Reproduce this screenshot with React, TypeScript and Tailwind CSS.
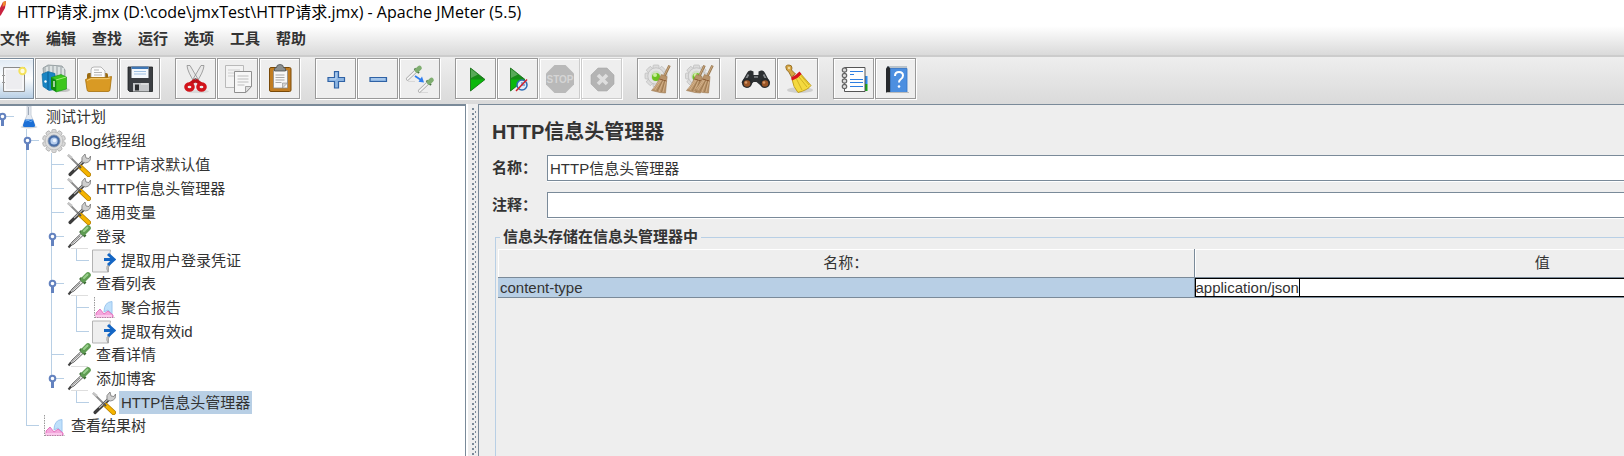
import { useState, type ReactNode } from 'react'
import clsx from 'clsx'

type IconName =
  | 'new' | 'templates' | 'open' | 'save' | 'cut' | 'copy' | 'paste' | 'plus' | 'minus' | 'toggle'
  | 'start' | 'startNoPause' | 'stop' | 'shutdown' | 'clear' | 'clearAll' | 'search' | 'resetSearch' | 'functions' | 'help'

const gearTeeth = [0, 45, 90, 135, 180, 225, 270, 315]

function Cog({ cx, cy }: { cx: number; cy: number }) {
  return (
    <g>
      {gearTeeth.map((a) => (
        <rect key={a} x={cx - 3} y={cy - 11} width="6" height="5" rx="1" fill="#dcdcdc" stroke="#b5b5b5" strokeWidth=".6" transform={`rotate(${a} ${cx} ${cy})`} />
      ))}
      <circle cx={cx} cy={cy} r="8.2" fill="#e3e3e3" stroke="#bdbdbd" strokeWidth=".8" />
      <circle cx={cx} cy={cy} r="5.4" fill="#d2dccb" />
      <circle cx={cx} cy={cy + 1} r="4" fill="#6cc21f" />
      <circle cx={cx - 1} cy={cy - 1} r="2" fill="#c9ef9c" />
    </g>
  )
}

function Broom({ dx }: { dx: number }) {
  return (
    <g transform={`translate(${dx} 0)`}>
      <path d="M28.5 3.5 23.5 14" stroke="#9c7c55" strokeWidth="2.6" />
      <path d="M28.2 4 23.2 14" stroke="#c9a67c" strokeWidth="1" />
      <path d="M20.5 12.5 26 14.5 25.5 20 24.5 31 19 30.5 10.5 28.5 Q16 23 18 17Z" fill="#b8936a" stroke="#9d7850" strokeWidth=".6" />
      <path d="M21 17 14 28M23 17 18 30M25 18 22 30M19.5 17.5 12.5 27" stroke="#d9b890" strokeWidth=".8" />
      <path d="M22 18 16 29M24 18 20.5 30" stroke="#8d6a40" strokeWidth=".6" />
      <path d="M18.5 17 25.5 19" stroke="#8a5a33" strokeWidth="1" />
    </g>
  )
}

function Dropper({ x, y }: { x: number; y: number }) {
  return (
    <g transform={`translate(${x} ${y})`}>
      <path d="M0 12 9 3.5" stroke="#a5a5a5" strokeWidth="3.2" strokeLinecap="round" />
      <path d="M0 12 9 3.5" stroke="#f4f4f4" strokeWidth="1.8" strokeLinecap="round" />
      <path d="M7 1.5 11.5 6" stroke="#47703f" strokeWidth="2" />
      <path d="M9.5 3.2 12 1" stroke="#7fae70" strokeWidth="4.6" strokeLinecap="round" />
    </g>
  )
}

const toolIcons: Record<IconName, ReactNode> = {
  new: (
    <g transform="translate(-1 0)">
      <path d="M7.5 5.5h21v24h-21z" fill="#ededf0" stroke="#8b8b8b" />
      <path d="M9 7h18v21H9z" fill="none" stroke="#fff" />
      <path d="M6 13.5h3M6 20.500h3" stroke="#999" />
      <circle cx="26.500" cy="9" r="3.200" fill="#fdfbe0" stroke="#f4e25c" strokeWidth="2" />
    </g>
  ),
  templates: (
    <>
      <ellipse cx="24" cy="28" rx="7" ry="2" fill="#c5c5c5" />
      <path d="M4 6 9 3l14 1 3 4v8H5z" fill="#b9c0c2" stroke="#8c9598" strokeWidth=".8" />
      <path d="M8 5v8M12 4v8M16 4v9M20 5v8M24 6v8" stroke="#e7ebec" strokeWidth="1.600" />
      <path d="M3 12 9 9.500l7 2v16l-6 1-6-4z" fill="#1a86c4" stroke="#0c6498" strokeWidth=".6" />
      <path d="M9 10v18" stroke="#0b5d91" />
      <circle cx="6.500" cy="19.500" r="1.200" fill="#fff" />
      <path d="M12 15.500 17 18v12l-5-3z" fill="#118a11" />
      <path d="M12 15.500 22 12.500l5.500 2.500v12L17 30V18z" fill="#3cc61c" stroke="#129012" strokeWidth=".6" />
      <path d="M17 18 27 15" stroke="#a2ee7b" />
      <path d="M15 19v6" stroke="#fff" strokeWidth="1.200" />
    </>
  ),
  open: (
    <>
      <path d="M6 13q0-2 2-2h17q2 0 2 2v10H6z" fill="#9a6a10" />
      <path d="M10 16V8q0-3 3-3h7l4 4v7z" fill="#fbfbfb" stroke="#a7a7a7" strokeWidth=".8" />
      <path d="M13 8h5M13 10.500h8M13 13h8" stroke="#b5b5b5" />
      <path d="M4.500 17.500 9 15.500h17l4.500-1-1.500 13q0 2-2 2H8q-2 0-2-2z" fill="#d99a24" stroke="#a6700b" strokeWidth=".8" />
      <path d="M6 18.500 10 16.700h16l3-.7" stroke="#f6cf78" fill="none" />
    </>
  ),
  save: (
    <>
      <path d="M5 5h24.500v24.500H6.500L5 28z" fill="#3b3e42" stroke="#1d1f21" strokeWidth=".8" />
      <path d="M8.500 5h17v11h-17z" fill="#f4f8fc" />
      <path d="M8.500 4.600h17v2.400h-17z" fill="#3f77b5" />
      <path d="M11 9.500h12M11 12h12" stroke="#9fc0e2" />
      <path d="M10 21h16v8.500H10z" fill="#c4c6c8" />
      <path d="M12 22.500h4v6h-4z" fill="#2a2c2e" />
      <path d="M18 22h7" stroke="#eee" />
    </>
  ),
  cut: (
    <>
      <ellipse cx="19" cy="29.500" rx="11" ry="1.600" fill="#d9d9d9" />
      <path d="M8 3.500 11 3.500 19.500 18 16 21Q8.500 10 8 3.500zM25 3.500 22 3.500 13.500 18 17 21Q24.500 10 25 3.500z" fill="#e8e8e8" stroke="#8d8d8d" strokeWidth=".8" />
      <path d="M16.500 18 11 22M16.500 18 22 22" stroke="#c01016" strokeWidth="3.500" />
      <ellipse cx="10.500" cy="25" rx="3.600" ry="3" fill="#eee" stroke="#d2141b" strokeWidth="3.400" />
      <ellipse cx="22.500" cy="25" rx="3.600" ry="3" fill="#eee" stroke="#d2141b" strokeWidth="3.400" />
      <circle cx="16.500" cy="17" r="1" fill="#666" />
    </>
  ),
  copy: (
    <>
      <path d="M4.500 3.500h18v22h-18z" fill="#f3f3f3" stroke="#b9b9b9" />
      <path d="M7 8h12M7 11h12M7 14h12" stroke="#cfcfcf" />
      <path d="M13.500 9.500h17v15l-5.500 6H13.500z" fill="#f7f7f7" stroke="#8f8f8f" />
      <path d="M16.500 14h11M16.500 17h11M16.500 20h11M16.500 23h7" stroke="#bdbdbd" />
      <path d="M30.500 24.500 24.500 24.500 24.500 30.500z" fill="#ddd" stroke="#8f8f8f" strokeWidth=".8" />
    </>
  ),
  paste: (
    <>
      <rect x="6.500" y="5.500" width="21.500" height="24" rx="1.500" fill="#c17d22" stroke="#7a4a08" />
      <path d="M10.500 8.500h14v17.500h-14z" fill="#f8f8f8" stroke="#8b8b8b" strokeWidth=".8" />
      <path d="M12.500 13h9M12.500 15.500h9M12.500 18h9M12.500 20.500h6" stroke="#a9a9a9" />
      <path d="M24.500 21 19.500 26 19.500 21z" fill="#d5d5d5" stroke="#8b8b8b" strokeWidth=".6" />
      <path d="M11.500 9V7q0-1.500 2-1.500 0-3 3.500-3t3.500 3q2 0 2 1.500v2z" fill="#8b8f8f" stroke="#4d5050" strokeWidth=".8" />
    </>
  ),
  plus: (
    <>
      <path d="M15.500 9.500h4v6h6v4h-6v6.500h-4v-6.500h-6.500v-4h6.500z" fill="#8db5e2" stroke="#2f62a5" strokeWidth="1.200" />
      <path d="M17 11v6M11 17h6" stroke="#bcd6f2" />
    </>
  ),
  minus: (
    <>
      <path d="M9 15.500h16.500v4H9z" fill="#8db5e2" stroke="#2f62a5" strokeWidth="1.200" />
      <path d="M10 17h14" stroke="#bcd6f2" />
    </>
  ),
  toggle: (
    <>
      <path d="M5 19.500h7M17 30.500h8" stroke="#d8d8d8" />
      <Dropper x={4.5} y={5} />
      <Dropper x={16.5} y={17} />
      <path d="M12 14 18 18" stroke="#2d7df0" strokeWidth="1.800" />
      <path d="M21 20.500 15.500 19.800 19 14.500z" fill="#2d7df0" />
    </>
  ),
  start: (
    <>
      <path d="M11.500 6 26 17.500 11.500 29z" fill="#178c17" stroke="#0c6b0c" strokeWidth=".8" />
      <path d="M12 17.500H25.500L12 28z" fill="#0bb80b" />
      <path d="M12 7 19 12.500 12 16z" fill="#58a858" />
    </>
  ),
  startNoPause: (
    <>
      <path d="M9.500 6 24 17.500 9.500 29z" fill="#178c17" stroke="#0c6b0c" strokeWidth=".8" />
      <path d="M10 17.500H23.500L10 28z" fill="#0bb80b" />
      <path d="M10 7 17 12.500 10 16z" fill="#58a858" />
      <circle cx="21" cy="23" r="5" fill="#dfeaf6" stroke="#2f6cb3" strokeWidth="1.500" />
      <path d="M21 20v3h3" stroke="#2f6cb3" fill="none" />
      <path d="M15 29 26 17.500" stroke="#d3202a" strokeWidth="1.500" />
    </>
  ),
  stop: (
    <>
      <path d="M11.500 3h11l8.500 8.500v11L22.500 31h-11L3 22.500v-11z" fill="#b9b9b9" />
      <text x="17" y="21" textAnchor="middle" fontSize="10" fontWeight="700" fontFamily="Liberation Sans" fill="#d5d5d5">STOP</text>
    </>
  ),
  shutdown: (
    <>
      <path d="M13 6h9l7 7v9l-7 7h-9l-7-7v-9z" fill="#b4b4b4" stroke="#a8a8a8" strokeWidth=".6" />
      <path d="M13 13 22 22M22 13 13 22" stroke="#dedede" strokeWidth="3.600" />
    </>
  ),
  clear: (
    <>
      <Cog cx={15} cy={14} />
      <Broom dx={0} />
    </>
  ),
  clearAll: (
    <>
      <Cog cx={13.5} cy={14} />
      <Broom dx={-7} />
      <Broom dx={1} />
    </>
  ),
  search: (
    <>
      <path d="M8 11q1-3 4-2.500l2.500 1V13h5V9.500l2.500-1q3-.5 4 2.500l5 9.500-7 5-6.500-5.500h-3L9.500 25.500l-7-5z" fill="#2c2f31" />
      <path d="M9.500 12.500 7 17M24.500 12.500 27 17M15 15h4" stroke="#85898c" strokeWidth="1.600" />
      <circle cx="8" cy="21" r="5" fill="#26292b" />
      <circle cx="26" cy="21" r="5" fill="#26292b" />
      <circle cx="8" cy="21.500" r="3.300" fill="#9a5526" />
      <circle cx="26" cy="21.500" r="3.300" fill="#9a5526" />
      <circle cx="7" cy="20.500" r="1.300" fill="#d69868" />
      <circle cx="25" cy="20.500" r="1.300" fill="#d69868" />
    </>
  ),
  resetSearch: (
    <>
      <ellipse cx="19" cy="28" rx="13" ry="3" fill="#cfcfcf" />
      <path d="M5 6q-1-3 3-3 3 0 3 3l-.5 2 4 4-4 3-3-5.500Q5.500 9 5 6z" fill="#d6a545" stroke="#8a6212" strokeWidth=".8" />
      <circle cx="8" cy="6" r="1.200" fill="#f0dca0" />
      <path d="M19 11 30 23.500Q27 28 17 30.500 12 25 11 17z" fill="#f4d93f" stroke="#b59110" strokeWidth=".8" />
      <path d="M18 15 26 25M15.500 17 21 28M20 13.500 28 23" stroke="#c9a81c" strokeWidth=".8" />
      <path d="M10 15.500Q15 13.500 18.500 9.500L20.500 12Q17 16.500 11 18.500z" fill="#d8141c" />
    </>
  ),
  functions: (
    <>
      <path d="M27 14h3.500v8H27z" fill="#2d8cf0" />
      <path d="M27 22h3.500v7H27z" fill="#17a317" />
      <path d="M7.500 5.500h20.500v24H7.500z" fill="#fdfdfd" stroke="#555" />
      <path d="M13 9.500h13M13 12.500h4M13 17.500h13M13 20.500h13M13 24.500h13" stroke="#2d7de0" strokeWidth="1.200" />
      {[7, 12.5, 18, 23.5].map((y) => (
        <circle key={y} cx="7.500" cy={y + 1} r="2.200" fill="#ddd" stroke="#666" strokeWidth="1.200" />
      ))}
    </>
  ),
  help: (
    <>
      <path d="M8 4h20v4H8z" fill="#b9c3cb" />
      <path d="M7 6.500 9 4l2.500 2.500v24H7z" fill="#26292d" />
      <path d="M11.500 6.500H28v24H11.500z" fill="#4c8fe0" stroke="#3273c4" strokeWidth=".8" />
      <path d="M8 30.500h22" stroke="#bbb" />
      <path d="M16 14q0-4 4-4t4 3.500q0 2.500-2.500 4-1.500 1-1.500 3" fill="none" stroke="#fff" strokeWidth="2" />
      <circle cx="20" cy="24.500" r="1.300" fill="#fff" />
    </>
  ),
}

type Tool = { icon: IconName; label: string; disabled?: boolean; active?: boolean }

const TOOL_GROUPS: Tool[][] = [
  [{ icon: 'new', label: '新建', active: true }, { icon: 'templates', label: '模板' }, { icon: 'open', label: '打开' }, { icon: 'save', label: '保存' }],
  [{ icon: 'cut', label: '剪切' }, { icon: 'copy', label: '复制' }, { icon: 'paste', label: '粘贴' }],
  [{ icon: 'plus', label: '展开' }, { icon: 'minus', label: '折叠' }, { icon: 'toggle', label: '切换' }],
  [
    { icon: 'start', label: '启动' }, { icon: 'startNoPause', label: '不停顿开始' },
    { icon: 'stop', label: '停止', disabled: true }, { icon: 'shutdown', label: '关闭', disabled: true },
  ],
  [{ icon: 'clear', label: '清除' }, { icon: 'clearAll', label: '清除全部' }],
  [{ icon: 'search', label: '查找' }, { icon: 'resetSearch', label: '重置查找' }],
  [{ icon: 'functions', label: '函数助手' }, { icon: 'help', label: '帮助' }],
]

const MENUS = ['文件', '编辑', '查找', '运行', '选项', '工具', '帮助']

type NodeKind = 'plan' | 'threads' | 'config' | 'sampler' | 'extractor' | 'report'

const nodeIcons: Record<NodeKind, ReactNode> = {
  plan: (
    <>
      <ellipse cx="12" cy="22" rx="8.500" ry="1.500" fill="#cfd6de" />
      <path d="M10 1h4v9l4 10q.5 2-1.500 2h-9q-2 0-1.500-2l4-10z" fill="#e4e9f0" stroke="#c2c9d3" strokeWidth=".8" />
      <path d="M8 14.500h8L18 20q.5 2-1.500 2h-9q-2 0-1.500-2z" fill="#1b6fd6" />
      <path d="M8.500 16q3-1.500 4 0t3-.5" stroke="#6fb0f5" fill="none" />
      <path d="M11.500 2v8" stroke="#8d98a8" strokeWidth=".8" />
    </>
  ),
  threads: (
    <>
      {[0, 36, 72, 108, 144, 180, 216, 252, 288, 324].map((a) => (
        <rect key={a} x="9.800" y=".5" width="4.400" height="5" rx="1.200" fill="#d8d8d8" stroke="#a8a8a8" strokeWidth=".7" transform={`rotate(${a} 12 12)`} />
      ))}
      <circle cx="12" cy="12" r="8.800" fill="#dedede" stroke="#b9b9b9" strokeWidth=".7" />
      <circle cx="12" cy="12" r="6" fill="#4a6fa8" stroke="#8794aa" strokeWidth=".8" />
      <circle cx="12" cy="12" r="3.600" fill="#b5cdee" />
      <circle cx="12.500" cy="11.500" r="1.800" fill="#eaf3ff" />
    </>
  ),
  config: (
    <>
      <path d="M1 2 12 13" stroke="#8a8a8a" strokeWidth="1.800" />
      <path d="M1 2 5 5" stroke="#c5c5c5" strokeWidth="2.400" />
      <path d="M3 21.500 17 8" stroke="#3c3c3c" strokeWidth="3.200" strokeLinecap="round" />
      <path d="M7 17 17 7.500" stroke="#b9b9b9" strokeWidth="1.200" />
      <path d="M15 9 Q13.500 4 18 1l1 4 3 .5L23.500 3Q24.500 9 18.500 10z" fill="#cfcfcf" stroke="#777" strokeWidth=".8" />
      <path d="M14 14.500 21.500 21.500" stroke="#b17d00" strokeWidth="5" strokeLinecap="round" />
      <path d="M14 14.500 21.500 21.500" stroke="#f5b400" strokeWidth="3.600" strokeLinecap="round" />
      <path d="M11.500 12.500 14 15" stroke="#555" strokeWidth="2" />
    </>
  ),
  sampler: (
    <>
      <path d="M4 23.500h17" stroke="#dedede" />
      <path d="M2 21.500 5 17 14 8.500 16 10.500 7 19z" fill="#e4e4e4" stroke="#666" strokeLinejoin="round" />
      <path d="M5 18.500 13 11" stroke="#888" />
      <path d="M1.500 22.500 4 19.500" stroke="#444" strokeWidth="2" />
      <path d="M13 6 18.500 11.500" stroke="#3d6b35" strokeWidth="2.600" />
      <path d="M16.500 7.500 21 3" stroke="#5f9c53" strokeWidth="5.600" strokeLinecap="round" />
      <path d="M17 6 20.500 2.500" stroke="#98cf8b" strokeWidth="2" strokeLinecap="round" />
    </>
  ),
  extractor: (
    <>
      <path d="M.5 1h18q-1 3 0 5v9q-3 3-2 8H.5z" fill="#efefef" stroke="#b3b3b3" />
      <path d="M20 13q-5 4-4 10-2-3-1-6z" fill="#ccc" stroke="#999" strokeWidth=".7" />
      <path d="M12 10.500h9" stroke="#1466c4" strokeWidth="3" />
      <path d="M16 5 22 10.500 16 16" fill="none" stroke="#1466c4" strokeWidth="3" />
    </>
  ),
  report: (
    <>
      <path d="M2.500 1v21M2.500 21.500H23" stroke="#9a9a9a" strokeDasharray="1.500 1" />
      <path d="M12 16Q12 6 20 5.500V18l-4-4z" fill="#bfe0fb" stroke="#9cc6ee" />
      <path d="M4 21V17l4-4 4 5 4-3 5 4v2z" fill="#f4a6dc" stroke="#dd5fb4" strokeWidth=".8" />
      <path d="M4 20h16" stroke="#fbc8ec" strokeWidth="2" />
    </>
  ),
}

// each guide is one 25px column left of the icon
type Guide = 'blank' | 'line' | 'tee' | 'elbow' | 'open' | 'root'
type TreeNode = { label: string; kind: NodeKind; guides: Guide[]; last?: boolean }

const TREE: TreeNode[] = [
  { label: '测试计划', kind: 'plan', guides: ['root'] },
  { label: 'Blog线程组', kind: 'threads', guides: ['blank', 'open'] },
  { label: 'HTTP请求默认值', kind: 'config', guides: ['blank', 'line', 'tee'] },
  { label: 'HTTP信息头管理器', kind: 'config', guides: ['blank', 'line', 'tee'] },
  { label: '通用变量', kind: 'config', guides: ['blank', 'line', 'tee'] },
  { label: '登录', kind: 'sampler', guides: ['blank', 'line', 'open'] },
  { label: '提取用户登录凭证', kind: 'extractor', guides: ['blank', 'line', 'line', 'elbow'], last: true },
  { label: '查看列表', kind: 'sampler', guides: ['blank', 'line', 'open'] },
  { label: '聚合报告', kind: 'report', guides: ['blank', 'line', 'line', 'tee'] },
  { label: '提取有效id', kind: 'extractor', guides: ['blank', 'line', 'line', 'elbow'], last: true },
  { label: '查看详情', kind: 'sampler', guides: ['blank', 'line', 'tee'] },
  { label: '添加博客', kind: 'sampler', guides: ['blank', 'line', 'root'] },
  { label: 'HTTP信息头管理器', kind: 'config', guides: ['blank', 'line', 'blank', 'elbow'], last: true },
  { label: '查看结果树', kind: 'report', guides: ['blank', 'elbow'] },
]

const SELECTED = 12

function GuideCell({ type, first }: { type: Guide; first: boolean }) {
  const handle = type === 'open' || type === 'root'
  return (
    <span className="relative flex w-[25px] shrink-0 flex-col self-stretch pl-3">
      <span
        className={clsx(
          'h-1/2 border-[#b8cfe5]',
          type !== 'blank' && !first && 'border-l',
          type !== 'blank' && type !== 'line' && 'border-b',
        )}
      />
      <span className={clsx('h-1/2 border-[#b8cfe5]', (type === 'line' || type === 'tee' || type === 'open') && 'border-l')} />
      {handle && (
        <svg viewBox="0 0 9 14" className="absolute left-[9px] top-[7px] h-[14px] w-[9px]">
          <path d="M4.500 6v8" stroke="#6382bf" strokeWidth="3" />
          <circle cx="4.500" cy="4.500" r="2.800" fill="#fff" stroke="#6382bf" strokeWidth="2" />
        </svg>
      )}
    </span>
  )
}

function Tree() {
  const [selected, setSelected] = useState(SELECTED)
  return (
    <ul className="-ml-[11px] -mt-px">
      {TREE.map((n, i) => (
        <li key={i} className={clsx('flex items-center', n.last ? 'h-[23px]' : 'h-6')}>
          {n.guides.map((g, j) => <GuideCell key={j} type={g} first={i === 0} />)}
          <svg viewBox="0 0 24 24" className="mx-[3px] h-6 w-6 shrink-0">{nodeIcons[n.kind]}</svg>
          <button
            type="button"
            onClick={() => setSelected(i)}
            className={clsx('h-[23px] whitespace-nowrap px-[2px] leading-[22px]', i === selected && 'bg-[#b8cfe5]')}
          >
            {n.label}
          </button>
        </li>
      ))}
    </ul>
  )
}

function ToolButton({ tool }: { tool: Tool }) {
  return (
    <button
      type="button"
      aria-label={tool.label}
      disabled={tool.disabled}
      className={clsx(
        'mb-px mr-px flex h-[41px] w-[41px] shrink-0 items-center justify-center border shadow-[1px_1px_0_#fff,inset_1px_1px_0_#fff]',
        tool.active ? 'border-[#7a8a99] bg-linear-to-b from-[#dfe9f3] via-white to-[#b8cfe5]' : 'bg-[#eee]',
        !tool.active && (tool.disabled ? 'border-[#ccc]' : 'border-[#999]'),
      )}
    >
      <svg viewBox="0 0 33 33" className="h-[33px] w-[33px] shrink-0">{toolIcons[tool.icon]}</svg>
    </button>
  )
}

function HeaderPanel() {
  const [name, setName] = useState('HTTP信息头管理器')
  const [comment, setComment] = useState('')
  const [value, setValue] = useState('application/json')
  const field = 'h-[26px] flex-1 border border-[#7a8a99] bg-white px-[2px] pb-[2px] shadow-[0_1px_0_#fff] outline-none'
  return (
    <section className="flex min-w-[1427px] flex-1 flex-col border-l border-t border-[#7a8a99] pl-[13px] pr-3">
      <h1 className="mt-3 text-[20px] font-bold leading-[30px]">HTTP信息头管理器</h1>
      <div className="mt-2 flex items-center">
        <label htmlFor="name" className="w-[55px] font-bold">名称：</label>
        <input id="name" value={name} onChange={(e) => setName(e.target.value)} className={field} />
      </div>
      <div className="mt-[11px] flex items-center">
        <label htmlFor="comment" className="w-[55px] font-bold">注释：</label>
        <input id="comment" value={comment} onChange={(e) => setComment(e.target.value)} className={field} />
      </div>
      <fieldset className="ml-[3px] mt-2 min-w-0 flex-1 border border-b-0 border-[#b8cfe5] px-[2px]">
        <legend className="ml-[2px] px-[3px] font-bold leading-[22px]">信息头存储在信息头管理器中</legend>
        <table className="mt-px w-full table-fixed border-collapse">
          <thead>
            <tr className="h-7">
              <th className="border-b border-r border-[#7a8a99] p-0 font-normal shadow-[inset_1px_1px_0_#fff]">名称：</th>
              <th className="border-b border-[#7a8a99] p-0 font-normal shadow-[inset_1px_1px_0_#fff]">值</th>
            </tr>
          </thead>
          <tbody>
            <tr className="h-5">
              <td className="border-b border-r border-[#7a8a99] bg-[#b8cfe5] p-0 pl-[2px] leading-[19px]">content-type</td>
              <td className="border-b border-[#7a8a99] p-0">
                <div className="flex h-[19px] items-center border border-black bg-white">
                  <input
                    aria-label="值"
                    value={value}
                    onChange={(e) => setValue(e.target.value)}
                    className="field-sizing-content h-[17px] border-r border-black leading-[17px] outline-none"
                  />
                </div>
              </td>
            </tr>
          </tbody>
        </table>
      </fieldset>
    </section>
  )
}

export default function App() {
  return (
    <div className="flex h-screen flex-col overflow-hidden bg-[#eee] font-['Liberation_Sans','Noto_Sans_CJK_SC',sans-serif] text-[15px] leading-[22px] text-[#333]">
      <header className="flex h-[26px] shrink-0 items-center bg-white pb-[2px] font-['Open_Sans','Noto_Sans_CJK_SC',sans-serif] text-[16px] text-black">
        <svg viewBox="0 0 17 24" className="h-6 w-[17px] shrink-0">
          <path d="M0 8 3 2 6 1 5 8 1 15 0 16z" fill="#c9223f" />
          <path d="M3 2 6 1 5.500 5 2.500 7z" fill="#f08a2c" />
        </svg>
        <span className="whitespace-nowrap">HTTP请求.jmx (D:\code\jmxTest\HTTP请求.jmx) - Apache JMeter (5.5)</span>
      </header>
      <nav className="flex h-[29px] shrink-0 gap-4 bg-linear-to-b from-white to-[#dadada]">
        {MENUS.map((m) => (
          <button key={m} type="button" className="pb-[3px] font-bold">{m}</button>
        ))}
      </nav>
      <div className="flex h-[49px] shrink-0 gap-[14px] border-t-2 border-[#ccc] bg-linear-to-b from-[#eee] to-[#dadada] pt-px">
        {TOOL_GROUPS.map((g, i) => (
          <div key={i} className={clsx('flex', i === 0 && '-ml-[7px]')}>
            {g.map((t) => <ToolButton key={t.icon} tool={t} />)}
          </div>
        ))}
      </div>
      <main className="flex min-h-0 flex-1">
        <aside className="w-[466px] shrink-0 overflow-hidden border-r border-t-2 border-[#7a8a99] bg-white">
          <Tree />
        </aside>
        <div className="flex w-3 shrink-0 justify-end border-l-2 border-white pr-px pt-1">
          <div className="w-[5px] bg-[conic-gradient(from_270deg_at_2px_2px,#7a8a99_90deg,transparent_90deg),conic-gradient(from_0deg_at_3px_3px,transparent_90deg,#7a8a99_90deg,#7a8a99_180deg,transparent_180deg)] bg-[length:5px_5px,4px_5px]" />
        </div>
        <HeaderPanel />
      </main>
    </div>
  )
}
